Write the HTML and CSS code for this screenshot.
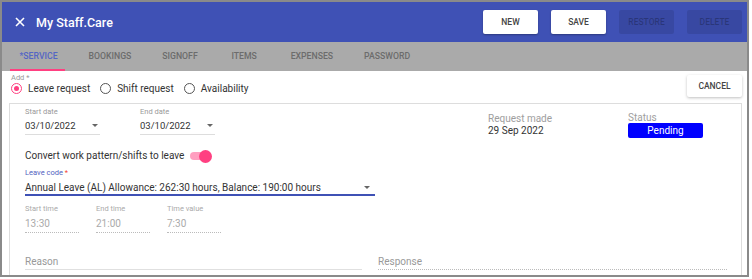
FILE: index.html
```html
<!DOCTYPE html>
<html>
<head lang="en">
    <meta charset="UTF-8">
    <title>My Staff.Care</title>
    <link rel="stylesheet" href="styles.css">
</head>
<body>
<div class="frame">
    <div class="appbar">
        <svg class="close" width="10" height="10" viewBox="0 0 10 10">
            <path d="M1 1L9 9M9 1L1 9" stroke="#fff" stroke-width="1.6" fill="none"/>
        </svg>
        <span class="title">My Staff.Care</span>
        <a href="#" class="btn">NEW</a>
        <a href="#" class="btn">SAVE</a>
        <a href="#" class="btn disabled">RESTORE</a>
        <a href="#" class="btn disabled">DELETE</a>
    </div>
    <div class="tabs">
        <div class="tab active">*SERVICE</div>
        <div class="tab">BOOKINGS</div>
        <div class="tab">SIGNOFF</div>
        <div class="tab">ITEMS</div>
        <div class="tab">EXPENSES</div>
        <div class="tab">PASSWORD</div>
    </div>
    <div class="content">
        <div class="add-row">
            <div class="add">
                <div class="small-label">Add *</div>
                <div class="radios">
                    <label class="radio checked"><span class="dot"></span>Leave request</label>
                    <label class="radio"><span class="dot"></span>Shift request</label>
                    <label class="radio"><span class="dot"></span>Availability</label>
                </div>
            </div>
            <a href="#" class="btn cancel">CANCEL</a>
        </div>
        <div class="panel">
            <div class="top">
                <div class="dates">
                    <div class="field date">
                        <div class="small-label">Start date</div>
                        <div class="value">03/10/2022<span class="arrow"></span></div>
                    </div>
                    <div class="field date">
                        <div class="small-label">End date</div>
                        <div class="value">03/10/2022<span class="arrow"></span></div>
                    </div>
                </div>
                <div class="made">
                    <div class="meta-label">Request made</div>
                    <div class="meta-value">29 Sep 2022</div>
                </div>
                <div class="status">
                    <div class="status-label">Status</div>
                    <div class="badge">Pending</div>
                </div>
            </div>
            <div class="convert">
                Convert work pattern/shifts to leave
                <span class="toggle"><span class="thumb"></span></span>
            </div>
            <div class="field code">
                <div class="small-label focus">Leave code <span class="req">*</span></div>
                <div class="value">Annual Leave (AL) Allowance: 262:30 hours, Balance: 190:00 hours<span class="arrow"></span></div>
            </div>
            <div class="times">
                <div class="field time">
                    <div class="small-label">Start time</div>
                    <div class="value">13:30</div>
                </div>
                <div class="field time">
                    <div class="small-label">End time</div>
                    <div class="value">21:00</div>
                </div>
                <div class="field time">
                    <div class="small-label">Time value</div>
                    <div class="value">7:30</div>
                </div>
            </div>
            <div class="notes">
                <div class="note">Reason</div>
                <div class="note dotted">Response</div>
            </div>
        </div>
    </div>
</div>
</body>
</html>
```

FILE: styles.css
```css
body {
    margin: 0;
    background: #fff;
    font-family: Roboto, "Liberation Sans", sans-serif;
    color: #333;
}
.frame {
    width: 749px;
    height: 277px;
    box-sizing: border-box;
    border: 2px solid #8a8a8a;
    overflow: hidden;
}
.appbar {
    height: 40px;
    background: #3f51b5;
    display: flex;
    align-items: center;
    padding: 0 5px 0 13px;
}
.close {
    margin-right: 11px;
}
.title {
    flex: 1;
    color: #fff;
    font-size: 12.5px;
    font-weight: 500;
}
.btn {
    width: 55px;
    height: 24px;
    line-height: 24px;
    text-align: center;
    margin-left: 13px;
    background: #fff;
    color: #444;
    border-radius: 2px;
    box-shadow: 0 1px 2px rgba(0, 0, 0, 0.3);
    font-size: 8.5px;
    font-weight: 500;
    text-decoration: none;
}
.btn.disabled {
    background: rgba(0, 0, 0, 0.1);
    color: rgba(0, 0, 0, 0.25);
    box-shadow: none;
}
.tabs {
    height: 29px;
    background: #aaa;
    display: flex;
    padding-left: 2px;
}
.tab {
    position: relative;
    min-width: 62px;
    box-sizing: border-box;
    padding: 0 15.5px;
    text-align: center;
    line-height: 28px;
    font-size: 8.7px;
    font-weight: 500;
    color: #6c6c6c;
}
.tab.active {
    color: #5566c4;
}
.tab.active::after {
    content: "";
    position: absolute;
    left: 6px;
    right: 8px;
    bottom: 0;
    height: 2px;
    background: #ff4081;
}
.content {
    padding: 0 5px 0 7px;
}
.add-row {
    display: flex;
    justify-content: space-between;
    align-items: flex-start;
}
.add {
    padding-left: 2px;
    margin-top: 2px;
}
.small-label {
    font-size: 7.5px;
    line-height: 9px;
    color: #999;
}
.small-label.focus {
    color: #5262c0;
}
.small-label .req {
    color: #f44336;
}
.radios {
    display: flex;
    height: 12px;
    align-items: center;
}
.radio {
    display: flex;
    align-items: center;
    margin-right: 10px;
    font-size: 10px;
    color: #333;
}
.radio .dot {
    width: 11px;
    height: 11px;
    box-sizing: border-box;
    border: 1.5px solid #555;
    border-radius: 50%;
    margin-right: 6px;
    display: flex;
    align-items: center;
    justify-content: center;
}
.radio.checked .dot {
    border-color: #ff4081;
}
.radio.checked .dot::after {
    content: "";
    width: 5px;
    height: 5px;
    border-radius: 50%;
    background: #ff4081;
}
.btn.cancel {
    margin-top: 4px;
    height: 22px;
    line-height: 22px;
    box-shadow: 0 1px 3px rgba(0, 0, 0, 0.25);
}
.panel {
    margin-top: 6px;
    border: 1px solid #ddd;
    border-bottom: none;
    padding: 3px 0 20px 15px;
    height: 200px;
}
.top {
    display: grid;
    grid-template-columns: 463px 140px auto;
}
.dates {
    display: flex;
    gap: 40px;
}
.field .value {
    position: relative;
    font-size: 9.5px;
    color: #333;
}
.field.date {
    width: 75px;
}
.field.date .value {
    margin-top: 2px;
    line-height: 15px;
    padding-bottom: 1px;
    border-bottom: 1px solid #ddd;
}
.arrow {
    position: absolute;
    right: 2px;
    top: 6px;
    border-left: 3px solid transparent;
    border-right: 3px solid transparent;
    border-top: 3px solid #666;
}
.made {
    margin-top: 6px;
    font-size: 10px;
    line-height: 12px;
}
.meta-label {
    color: #9e9e9e;
}
.meta-value {
    color: #333;
}
.status {
    margin-top: 5px;
    font-size: 10px;
}
.status-label {
    color: #9e9e9e;
    line-height: 11px;
}
.badge {
    width: 75px;
    height: 15px;
    line-height: 15px;
    background: #0000ff;
    color: #fff;
    text-align: center;
    border-radius: 2px;
}
.convert {
    margin-top: 11px;
    display: flex;
    align-items: center;
    font-size: 10px;
    line-height: 14px;
    color: #333;
}
.toggle {
    position: relative;
    width: 20px;
    height: 8px;
    margin-left: 6px;
    border-radius: 4px;
    background: rgba(255, 64, 129, 0.5);
}
.toggle .thumb {
    position: absolute;
    right: -2px;
    top: -2.5px;
    width: 13px;
    height: 13px;
    border-radius: 50%;
    background: #ff4081;
}
.field.code {
    margin-top: 5px;
    width: 350px;
}
.field.code .value {
    margin-top: 4px;
    font-size: 10px;
    line-height: 13px;
    border-bottom: 2px solid #3f51b5;
}
.field.code .arrow {
    right: 5px;
    top: 5px;
}
.times {
    display: flex;
    gap: 17px;
    margin-top: 8px;
}
.field.time {
    width: 54px;
}
.field.time .small-label {
    color: #aaa;
}
.field.time .value {
    margin-top: 4px;
    font-size: 10px;
    line-height: 14px;
    color: #aaa;
    padding-bottom: 1px;
    border-bottom: 1px dotted #bbb;
}
.notes {
    display: grid;
    grid-template-columns: 337px 349px;
    gap: 16px;
    margin-top: 22px;
}
.note {
    font-size: 10px;
    line-height: 14px;
    color: #999;
    border-bottom: 1px solid #e0e0e0;
}
.note.dotted {
    border-bottom: 1px dotted #bbb;
}
```
